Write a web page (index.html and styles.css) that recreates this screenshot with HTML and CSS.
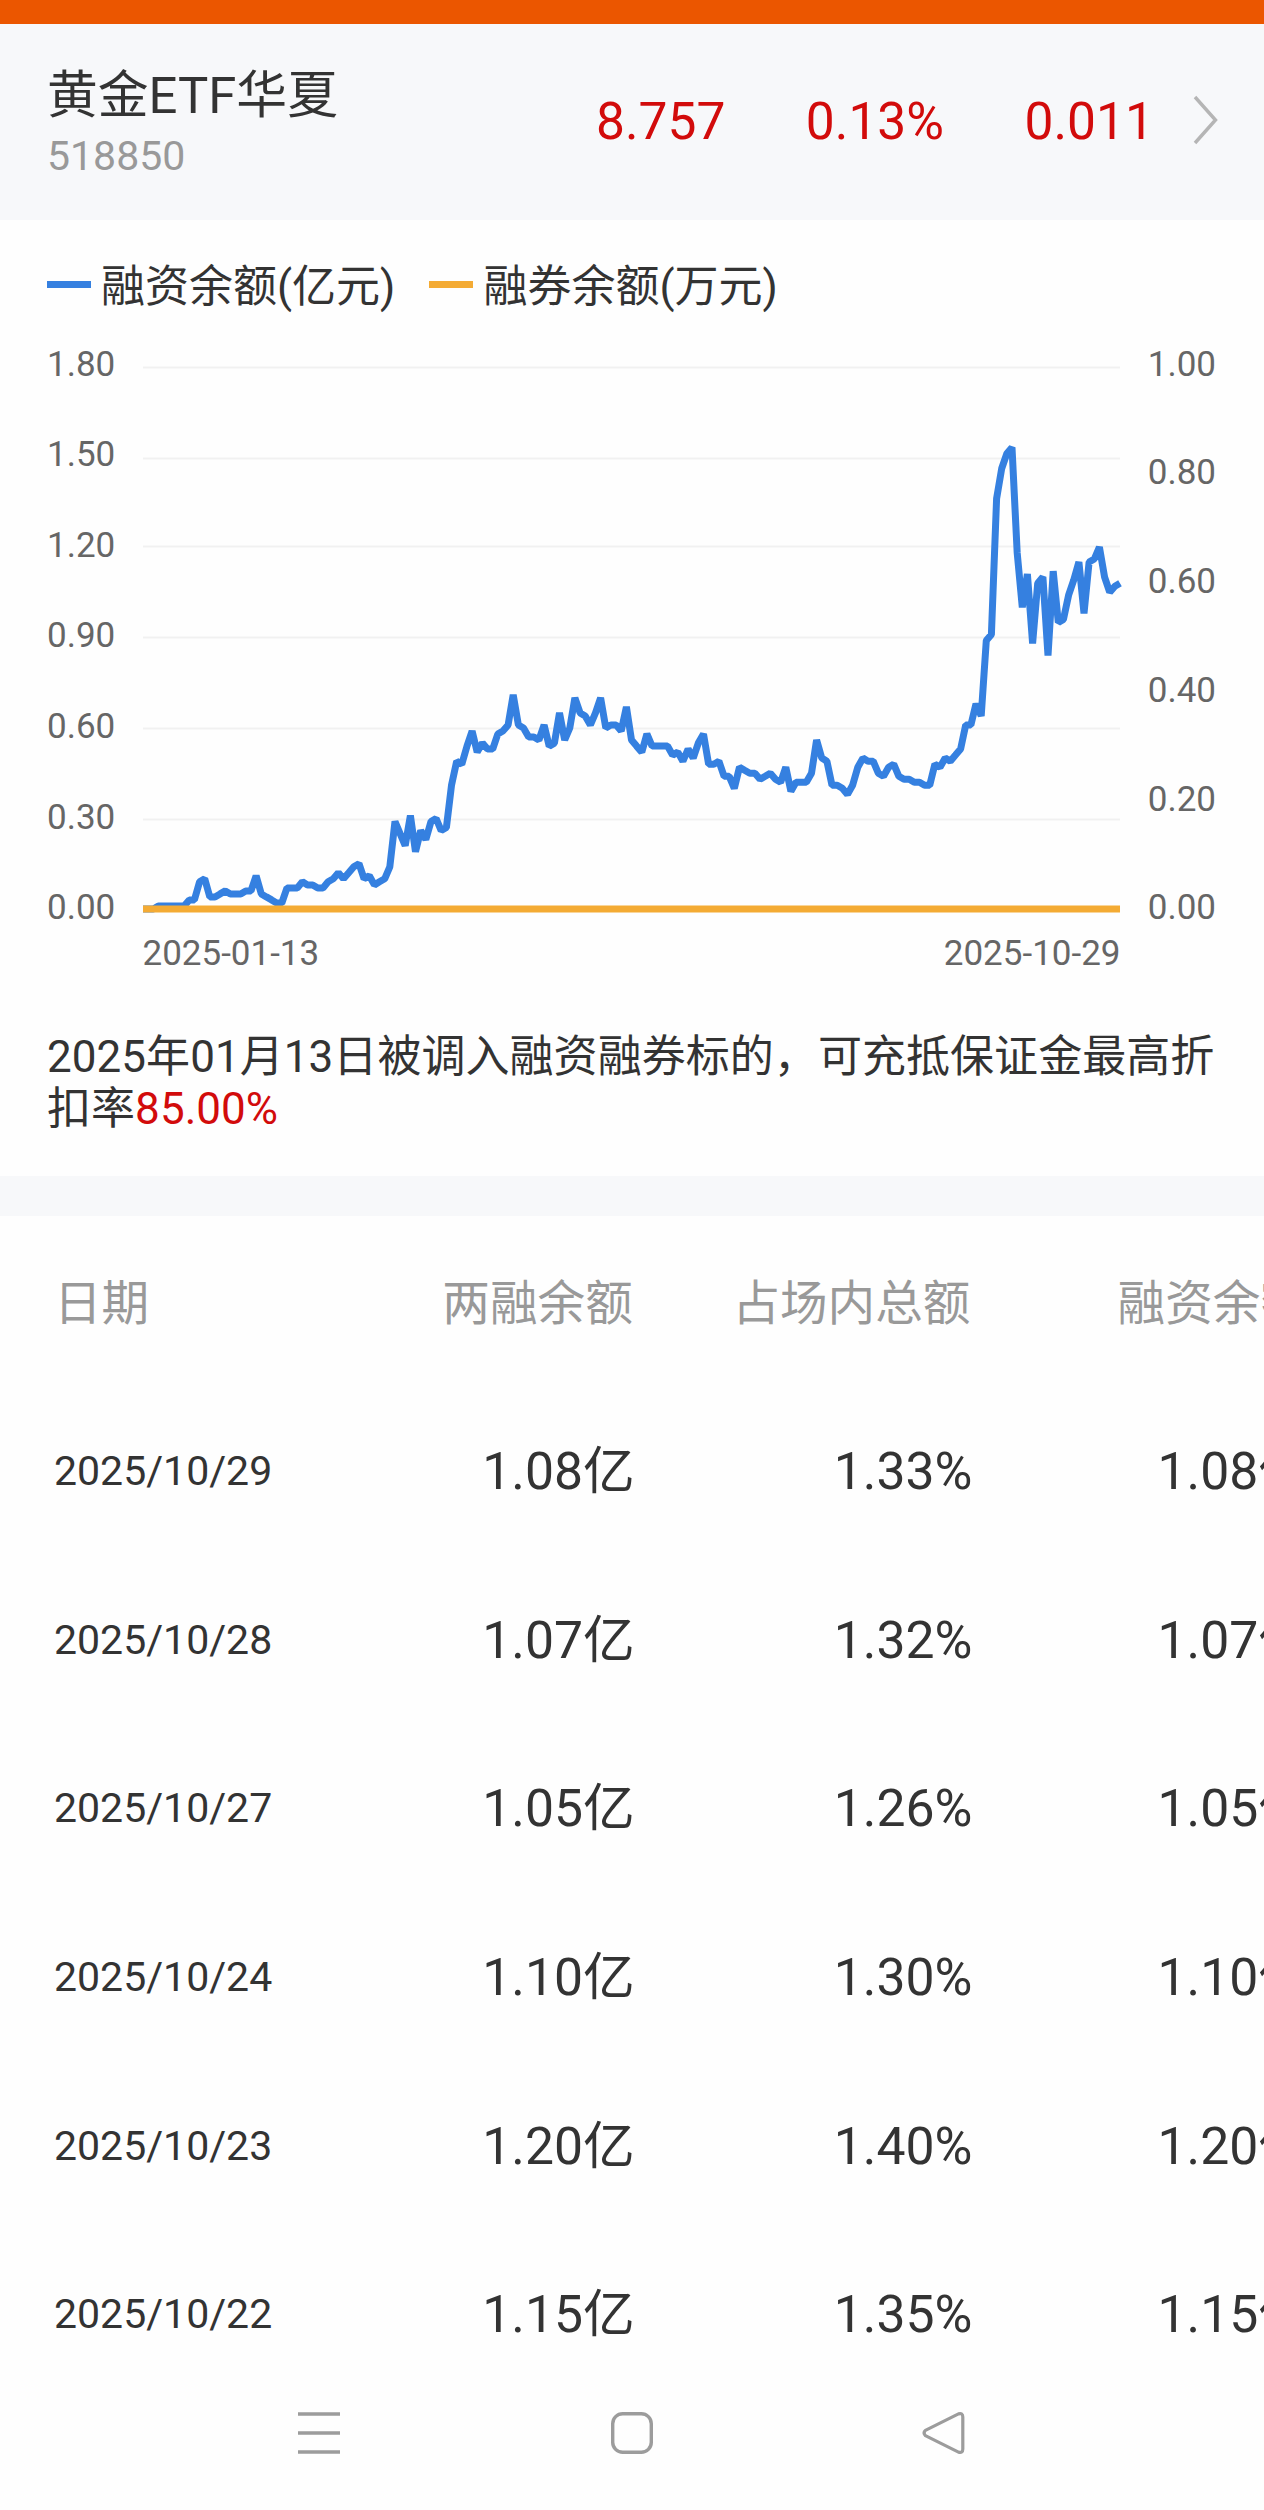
FILE: index.html
```html
<!doctype html>
<html lang="zh-CN">
<head>
  <meta charset="UTF-8">
  <meta name="viewport" content="width=device-width, initial-scale=1.0">

  <title>黄金ETF华夏 融资融券</title>

  <link rel="stylesheet" href="styles.css">
</head>

<body>
  <div class="status-bar"></div>

  <header class="quote">
    <div class="quote-name">
      <h1>黄金ETF华夏</h1>
      <span class="quote-code">518850</span>
    </div>

    <div class="quote-values">
      <span>8.757</span>
      <span>0.13%</span>
      <span>0.011</span>
    </div>

    <svg class="quote-arrow" width="26" height="52" viewBox="0 0 26 52">
      <path d="M2 3 L22.500 26 L2 49" fill="none" stroke="#b5b5b5" stroke-width="3.400"/>
    </svg>
  </header>

  <main>
    <section class="margin">
      <div class="legend">
        <span class="legend-item legend-buy">融资余额(亿元)</span>
        <span class="legend-item legend-sell">融券余额(万元)</span>
      </div>

      <svg class="chart" width="1264" height="660" viewBox="0 330 1264 660">
        <g class="grid">
          <path d="M143 367.500H1120"/>
          <path d="M143 458.500H1120"/>
          <path d="M143 546.500H1120"/>
          <path d="M143 637.500H1120"/>
          <path d="M143 728.500H1120"/>
          <path d="M143 819.500H1120"/>
        </g>

        <g class="axis">
          <text x="47" y="375.500">1.80</text>
          <text x="47" y="466">1.50</text>
          <text x="47" y="557">1.20</text>
          <text x="47" y="647">0.90</text>
          <text x="47" y="738">0.60</text>
          <text x="47" y="828.500">0.30</text>
          <text x="47" y="918.500">0.00</text>
        </g>

        <g class="axis axis-right">
          <text x="1216" y="375.500">1.00</text>
          <text x="1216" y="484">0.80</text>
          <text x="1216" y="593">0.60</text>
          <text x="1216" y="701.500">0.40</text>
          <text x="1216" y="810.500">0.20</text>
          <text x="1216" y="918.500">0.00</text>
        </g>

        <g class="axis">
          <text x="142.500" y="964.500">2025-01-13</text>
          <text class="date-end" x="1120.500" y="964.500">2025-10-29</text>
        </g>

        <polyline class="line line-buy" id="buy-line"/>
        <path class="line line-sell" d="M143 909H1120"/>
      </svg>

      <p class="note">2025年01月13日被调入融资融券标的，可充抵保证金最高折扣率<em>85.00%</em></p>
    </section>

    <table class="history">
      <thead>
        <tr>
          <th>日期</th>
          <th>两融余额</th>
          <th>占场内总额</th>
          <th>融资余额</th>
        </tr>
      </thead>
      <tbody>
        <tr>
          <td>2025/10/29</td>
          <td>1.08亿</td>
          <td>1.33%</td>
          <td>1.08亿</td>
        </tr>
        <tr>
          <td>2025/10/28</td>
          <td>1.07亿</td>
          <td>1.32%</td>
          <td>1.07亿</td>
        </tr>
        <tr>
          <td>2025/10/27</td>
          <td>1.05亿</td>
          <td>1.26%</td>
          <td>1.05亿</td>
        </tr>
        <tr>
          <td>2025/10/24</td>
          <td>1.10亿</td>
          <td>1.30%</td>
          <td>1.10亿</td>
        </tr>
        <tr>
          <td>2025/10/23</td>
          <td>1.20亿</td>
          <td>1.40%</td>
          <td>1.20亿</td>
        </tr>
        <tr>
          <td>2025/10/22</td>
          <td>1.15亿</td>
          <td>1.35%</td>
          <td>1.15亿</td>
        </tr>
      </tbody>
    </table>
  </main>

  <nav class="nav-bar">
    <svg width="44" height="44" viewBox="0 0 44 44">
      <path d="M1 3H43M1 22H43M1 41H43" fill="none" stroke="#9c9c9c" stroke-width="3.600"/>
    </svg>
    <svg width="44" height="44" viewBox="0 0 44 44">
      <rect x="2.700" y="2.700" width="38.600" height="38.600" rx="10" fill="none" stroke="#9c9c9c" stroke-width="3.400"/>
    </svg>
    <svg width="44" height="44" viewBox="0 0 44 44">
      <path d="M3.400 19.400 L36.500 2.900 Q40.800 1.600 40.800 6 V38 Q40.800 42.400 36.500 41.100 L3.400 24.600 Q0.800 22 3.400 19.400 Z" fill="none" stroke="#9c9c9c" stroke-width="3.200" stroke-linejoin="round"/>
    </svg>
  </nav>

  <script src="chart.js"></script>
</body>
</html>
```

FILE: styles.css
```css
*{
  box-sizing: border-box;
}

body{
  margin: 0;
  width: 1264px;
  height: 2510px;
  color: #333;
  font-family: Roboto, "Noto Sans CJK SC", sans-serif;
  font-size: 44px;
  background-color: #fefefe;
  overflow: hidden;
}

.status-bar{
  height: 24px;
  background: #eb5600;
}

/* quote header */
.quote{
  display: flex;
  align-items: center;
  height: 196px;
  padding: 0 45px 0 47px;
  background: #f7f8fa;
}

.quote-name{
  width: 549px;
}

.quote-name h1{
  margin: 0;
  font-size: 50.8px;
  font-weight: 400;
  line-height: 68px;
}

.quote-code{
  display: block;
  margin-top: -1px;
  color: #999;
  font-size: 41px;
  line-height: 54px;
}

.quote-values{
  display: flex;
  gap: 80.5px;
  color: #d20b0b;
  font-size: 51.5px;
  line-height: 60px;
}

.quote-arrow{
  margin-left: auto;
  margin-top: -5px;
}

/* margin trading chart */
.margin{
  height: 996px;
  border-bottom: 40px solid #f7f8fa;
}

.legend{
  display: flex;
  gap: 34px;
  height: 110px;
  padding: 35px 47px 0;
  line-height: 64px;
}

.legend-item{
  display: flex;
  align-items: center;
  height: 64px;
}

.legend-item::before{
  content: "";
  width: 44px;
  height: 7px;
  margin: -6px 10px 0 0;
  background: #3580e0;
}

.legend-sell::before{
  background: #f4ab34;
}

.chart{
  display: block;
}

.grid{
  stroke: #f1f1f1;
  stroke-width: 2;
}

.axis{
  fill: #666;
  font-size: 35px;
}

.axis-right,
.date-end{
  text-anchor: end;
}

.line{
  fill: none;
  stroke-width: 7;
  stroke-linejoin: bevel;
}

.line-buy{
  stroke: #3580e0;
}

.line-sell{
  stroke: #f4ab34;
}

.note{
  margin: 0;
  padding: 41px 40px 0 47px;
  line-height: 52px;
  letter-spacing: .05px;
}

.note em{
  color: #d20b0b;
  font-style: normal;
}

/* daily history, the last column runs off the screen */
.history{
  width: 1310px;
  border-collapse: collapse;
  table-layout: fixed;
}

.history th,
.history td{
  width: 337.5px;
  height: 168.6px;
  padding: 4px 0 0;
  font-weight: 400;
  line-height: 60px;
  text-align: right;
  white-space: nowrap;
}

.history th{
  height: 170px;
  padding: 5px 2px 0 0;
  color: #999;
  font-size: 47.6px;
}

.history td{
  font-size: 51.7px;
}

.history th:first-child,
.history td:first-child{
  width: 297px;
  padding-left: 54px;
  text-align: left;
}

.history td:first-child{
  padding-top: 2px;
  font-size: 41px;
}

/* system navigation */
.nav-bar{
  display: flex;
  justify-content: space-between;
  padding: 13px 298px 0 297px;
}
```

FILE: chart.js
```js
// margin balance per trading day, in 100 million yuan
var balance = [
  0, 0, 0, .01, .01, .01, .01, .01, .01, .03,
  .03, .09, .10, .04, .04, .05, .06, .05, .05, .05,
  .06, .06, .11, .05, .04, .03, .02, .02, .07, .07,
  .07, .09, .08, .08, .07, .07, .09, .10, .12, .10,
  .12, .14, .15, .10, .11, .08, .09, .10, .14, .29,
  .25, .21, .31, .19, .26, .23, .29, .30, .26, .27,
  .41, .49, .48, .54, .59, .52, .55, .53, .53, .58,
  .59, .61, .71, .61, .60, .57, .57, .56, .61, .54,
  .55, .65, .56, .60, .70, .65, .64, .61, .65, .70,
  .60, .61, .61, .59, .67, .56, .54, .52, .58, .54,
  .54, .54, .54, .51, .52, .49, .53, .50, .55, .58,
  .48, .48, .49, .44, .44, .40, .47, .46, .45, .45,
  .43, .44, .45, .43, .42, .47, .39, .42, .42, .42,
  .45, .56, .50, .49, .41, .41, .40, .38, .41, .47,
  .50, .49, .49, .45, .44, .47, .48, .44, .43, .43,
  .42, .42, .41, .41, .48, .47, .50, .49, .51, .53,
  .61, .61, .68, .64, .89, .91, 1.36, 1.46, 1.51, 1.53,
  1.18, 1.00, 1.11, .88, 1.08, 1.10, .84, 1.12, .95, .96,
  1.04, 1.09, 1.15, .98, 1.15, 1.16, 1.20, 1.10, 1.05, 1.07,
  1.08
];

var left = 143;
var right = 1120;
var bottom = 909;
var unit = 301.7;
var step = (right - left) / (balance.length - 1);

var points = balance.map(function(value, i){
  return (left + i * step).toFixed(1) + ',' + (bottom - value * unit).toFixed(1);
});

document.getElementById('buy-line').setAttribute('points', points.join(' '));
```
